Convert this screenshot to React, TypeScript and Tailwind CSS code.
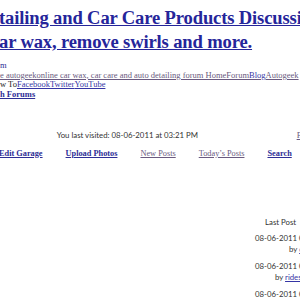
import React from "react";

const rows = [
  { date: "08-06-2011 03:21 PM", by: "dlw1960s" },
  { date: "08-06-2011 03:19 PM", by: "ridesmooth07" },
  { date: "08-06-2011 03:02 PM", by: "Scottwax" },
];

const App = () => {
  return (
    <div className="w-[300px] h-[300px] overflow-hidden bg-white font-['Liberation_Serif',serif]">
      <div className="w-[340px]">
        <h1 className="pt-[7px] -ml-px whitespace-nowrap">
          <a className="text-[18.6px] font-bold leading-[20px] tracking-[-0.15px] text-[#25259a] underline">
            tailing and Car Care Products Discussion
            <br />
            ar wax, remove swirls and more.
          </a>
        </h1>

        <div className="mt-[6px] text-[8.5px] leading-[9.7px] whitespace-nowrap">
          <div className="text-[#2e2e96]">m</div>
          <div className="text-[#6a5a80] underline">
            e autogeekonline car wax, car care and auto detailing forum HomeForum
            <span className="text-[#3535a5]">Blog</span>
            Autogeek
          </div>
          <div className="text-[#222]">
            w To
            <a className="text-[#3535a5] underline">Facebook</a>
            <a className="text-[#3535a5] underline">Twitter</a>
            <a className="text-[#3535a5] underline">YouTube</a>
          </div>
          <div className="font-bold text-[#2e2e96] underline">h Forums</div>
        </div>

        <div className="mt-[29px] flex items-end whitespace-nowrap">
          <div className="w-[198px] text-right font-['Lato',sans-serif] text-[7.8px] text-[#333]">
            You last visited: 08-06-2011 at 03:21 PM
          </div>
          <a className="ml-auto mr-[27px] text-[8.5px] text-[#6a5a80] underline">FAQ</a>
        </div>

        <div className="mt-[6px] -ml-px flex gap-[23px] text-[8.3px] whitespace-nowrap">
          <a className="font-bold text-[#2e2e96] underline">Edit Garage</a>
          <a className="font-bold text-[#2e2e96] underline">Upload Photos</a>
          <a className="text-[#6a5a80] underline">New Posts</a>
          <a className="text-[#6a5a80] underline">Today’s Posts</a>
          <a className="font-bold text-[#2e2e96] underline">Search</a>
        </div>

        <div className="mt-[57px] flex justify-end font-['Lato',sans-serif] text-[7.8px] text-[#333] whitespace-nowrap">
          <div className="w-[88px] flex flex-col">
            <div className="pl-[13px] -mb-[2px]">Last Post</div>
            {rows.map((r) => (
              <div key={r.date} className="mt-[6px] h-[22px] text-right pr-[7px]">
                <div>{r.date}</div>
                <div>
                  by <a className="text-[#3535a5] underline">{r.by}</a>
                </div>
              </div>
            ))}
          </div>
        </div>
      </div>
    </div>
  );
};

export default App;
